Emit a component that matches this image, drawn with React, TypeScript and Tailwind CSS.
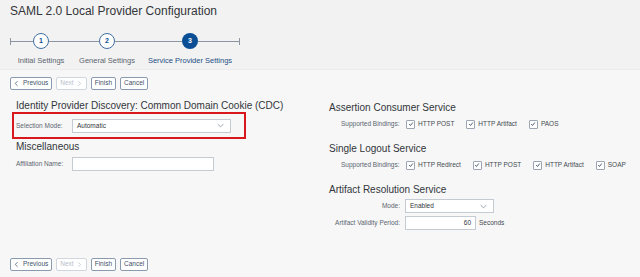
import React from 'react';

const font = { fontFamily: '"Liberation Sans", Arial, sans-serif' };

const Line = ({ w }: { w?: string }) => <div className={`h-px bg-[#8c97a3] ${w ?? 'flex-1'}`} />;

const Step = ({ n, label, width, active }: { n: number; label: string; width: string; active?: boolean }) => (
  <div className={`flex flex-col items-center ${width}`}>
    <div className="flex items-center w-full">
      <Line />
      <div
        className={
          active
            ? 'w-[16px] h-[16px] rounded-full bg-[#0a4f96] text-white text-[7px] font-bold flex items-center justify-center'
            : 'w-[16px] h-[16px] rounded-full bg-white border border-[#3f6fa3] text-[#0a4f96] text-[7px] font-bold flex items-center justify-center'
        }
      >
        {n}
      </div>
      <Line />
    </div>
    <div className={`mt-[6px] text-[7.5px] whitespace-nowrap ${active ? 'text-[#1f4f86]' : 'text-[#5b6570]'}`}>{label}</div>
  </div>
);

const Btn = ({ children, disabled }: { children: React.ReactNode; disabled?: boolean }) => (
  <button
    className={`h-[13px] px-[3px] flex items-center gap-[3px] rounded-[2px] bg-white border text-[6.5px] leading-none whitespace-nowrap ${
      disabled ? 'border-[#cfd6de] text-[#b8c0c9]' : 'border-[#8a9bb0] text-[#3d5168]'
    }`}
  >
    {children}
  </button>
);

const Chevron = ({ dir, size = 6 }: { dir: 'left' | 'right' | 'down'; size?: number }) => {
  const d = dir === 'left' ? 'M6 1 L2 5 L6 9' : dir === 'right' ? 'M2 1 L6 5 L2 9' : 'M1 3 L5 7 L9 3';
  return (
    <svg width={dir === 'down' ? size : 6} height={dir === 'down' ? size : 9} viewBox="0 0 10 10" fill="none" stroke="currentColor" strokeWidth="1.2">
      <path d={d} />
    </svg>
  );
};

const Buttons = () => (
  <div className="flex items-center gap-[4px] px-[10px]">
    <Btn>
      <Chevron dir="left" />
      Previous
    </Btn>
    <Btn disabled>
      Next
      <Chevron dir="right" />
    </Btn>
    <Btn>Finish</Btn>
    <Btn>Cancel</Btn>
  </div>
);

const Check = ({ label }: { label: string }) => (
  <div className="flex items-center gap-[3px]">
    <div className="w-[9px] h-[9px] bg-white border border-[#9ba6b2] rounded-[1px] flex items-center justify-center text-[#3d5168]">
      <svg width="6" height="6" viewBox="0 0 10 10" fill="none" stroke="currentColor" strokeWidth="1.5">
        <path d="M2 5 L4.2 7.5 L8 2.5" />
      </svg>
    </div>
    <span className="text-[6.5px] text-[#444b52] whitespace-nowrap">{label}</span>
  </div>
);

const Select = ({ value, w }: { value: string; w: string }) => (
  <div className={`h-[14px] ${w} bg-white border border-[#c4cbd3] flex items-center justify-between pl-[4px] pr-[6px]`}>
    <span className="text-[6.5px] text-[#32363a]">{value}</span>
    <span className="text-[#8a949e]">
      <Chevron dir="down" size={7} />
    </span>
  </div>
);

const Label = ({ children, w, right }: { children: React.ReactNode; w: string; right?: boolean }) => (
  <span className={`${w} ${right ? 'text-right' : ''} text-[6.5px] text-[#5b6570] whitespace-nowrap`}>{children}</span>
);

const App: React.FC = () => {
  return (
    <div className="w-[640px] h-[277px] bg-[#f7f7f7] flex flex-col overflow-hidden" style={font}>
      {/* Header */}
      <div className="bg-[#f2f2f2] h-[70px] border-b border-[#ebebeb]">
        <h1 className="pl-[10px] pt-[1px] text-[12px] text-[#32363a] leading-[20px]">SAML 2.0 Local Provider Configuration</h1>
        <div className="flex items-start pl-[10px] mt-[12px]">
          <div className="w-px h-[7px] bg-[#8c97a3] mt-[5px]" />
          <div className="mt-[8px]"><Line w="w-[5px]" /></div>
          <Step n={1} label="Initial Settings" width="w-[50px]" />
          <div className="mt-[8px]"><Line w="w-[13px]" /></div>
          <Step n={2} label="General Settings" width="w-[56px]" />
          <div className="mt-[8px]"><Line w="w-[11px]" /></div>
          <Step n={3} label="Service Provider Settings" width="w-[88px]" active />
          <div className="mt-[8px]"><Line w="w-[5px]" /></div>
          <div className="w-px h-[7px] bg-[#8c97a3] mt-[5px]" />
        </div>
      </div>

      <div className="mt-[7px]">
        <Buttons />
      </div>

      {/* Content */}
      <div className="grid grid-cols-[317px_1fr] mt-[9px] flex-1">
        <div className="pl-[12px]">
          <h2 className="pl-[4px] text-[10px] text-[#32363a] leading-[14px] whitespace-nowrap">
            Identity Provider Discovery: Common Domain Cookie (CDC)
          </h2>
          <div className="w-[234px] h-[27px] -mt-px border-2 border-[#d9181e] flex items-center pl-[2px] gap-[6px]">
            <Label w="w-[50px]">Selection Mode:</Label>
            <Select value="Automatic" w="w-[159px]" />
          </div>
          <h2 className="pl-[4px] mt-[1px] text-[10px] text-[#32363a] leading-[14px]">Miscellaneous</h2>
          <div className="flex items-center pl-[4px] gap-[6px] mt-[3px]">
            <Label w="w-[50px]">Affiliation Name:</Label>
            <div className="h-[14px] w-[142px] bg-white border border-[#c4cbd3]" />
          </div>
        </div>

        <div className="pl-[12px]">
          <h2 className="mt-[2px] text-[10px] text-[#32363a] leading-[14px]">Assertion Consumer Service</h2>
          <div className="flex items-center mt-[2px] pl-[12px] h-[14px]">
            <Label w="w-[65px]">Supported Bindings:</Label>
            <div className="flex items-center gap-[12px]">
              <Check label="HTTP POST" />
              <Check label="HTTP Artifact" />
              <Check label="PAOS" />
            </div>
          </div>
          <h2 className="mt-[11px] text-[10px] text-[#32363a] leading-[14px]">Single Logout Service</h2>
          <div className="flex items-center mt-[2px] pl-[12px] h-[14px]">
            <Label w="w-[65px]">Supported Bindings:</Label>
            <div className="flex items-center gap-[12px]">
              <Check label="HTTP Redirect" />
              <Check label="HTTP POST" />
              <Check label="HTTP Artifact" />
              <Check label="SOAP" />
            </div>
          </div>
          <h2 className="mt-[11px] text-[10px] text-[#32363a] leading-[14px]">Artifact Resolution Service</h2>
          <div className="flex items-center mt-[2px] gap-[5px]">
            <Label w="w-[71px]" right>Mode:</Label>
            <Select value="Enabled" w="w-[89px]" />
          </div>
          <div className="flex items-center mt-[3px] gap-[5px]">
            <Label w="w-[71px]" right>Artifact Validity Period:</Label>
            <div className="h-[14px] w-[71px] bg-white border border-[#c4cbd3] flex items-center justify-end pr-[4px] text-[6.5px] text-[#32363a]">
              60
            </div>
            <span className="-ml-[2px] text-[6.5px] text-[#444b52]">Seconds</span>
          </div>
        </div>
      </div>

      <div className="mb-[6px]">
        <Buttons />
      </div>
    </div>
  );
};

export default App;
